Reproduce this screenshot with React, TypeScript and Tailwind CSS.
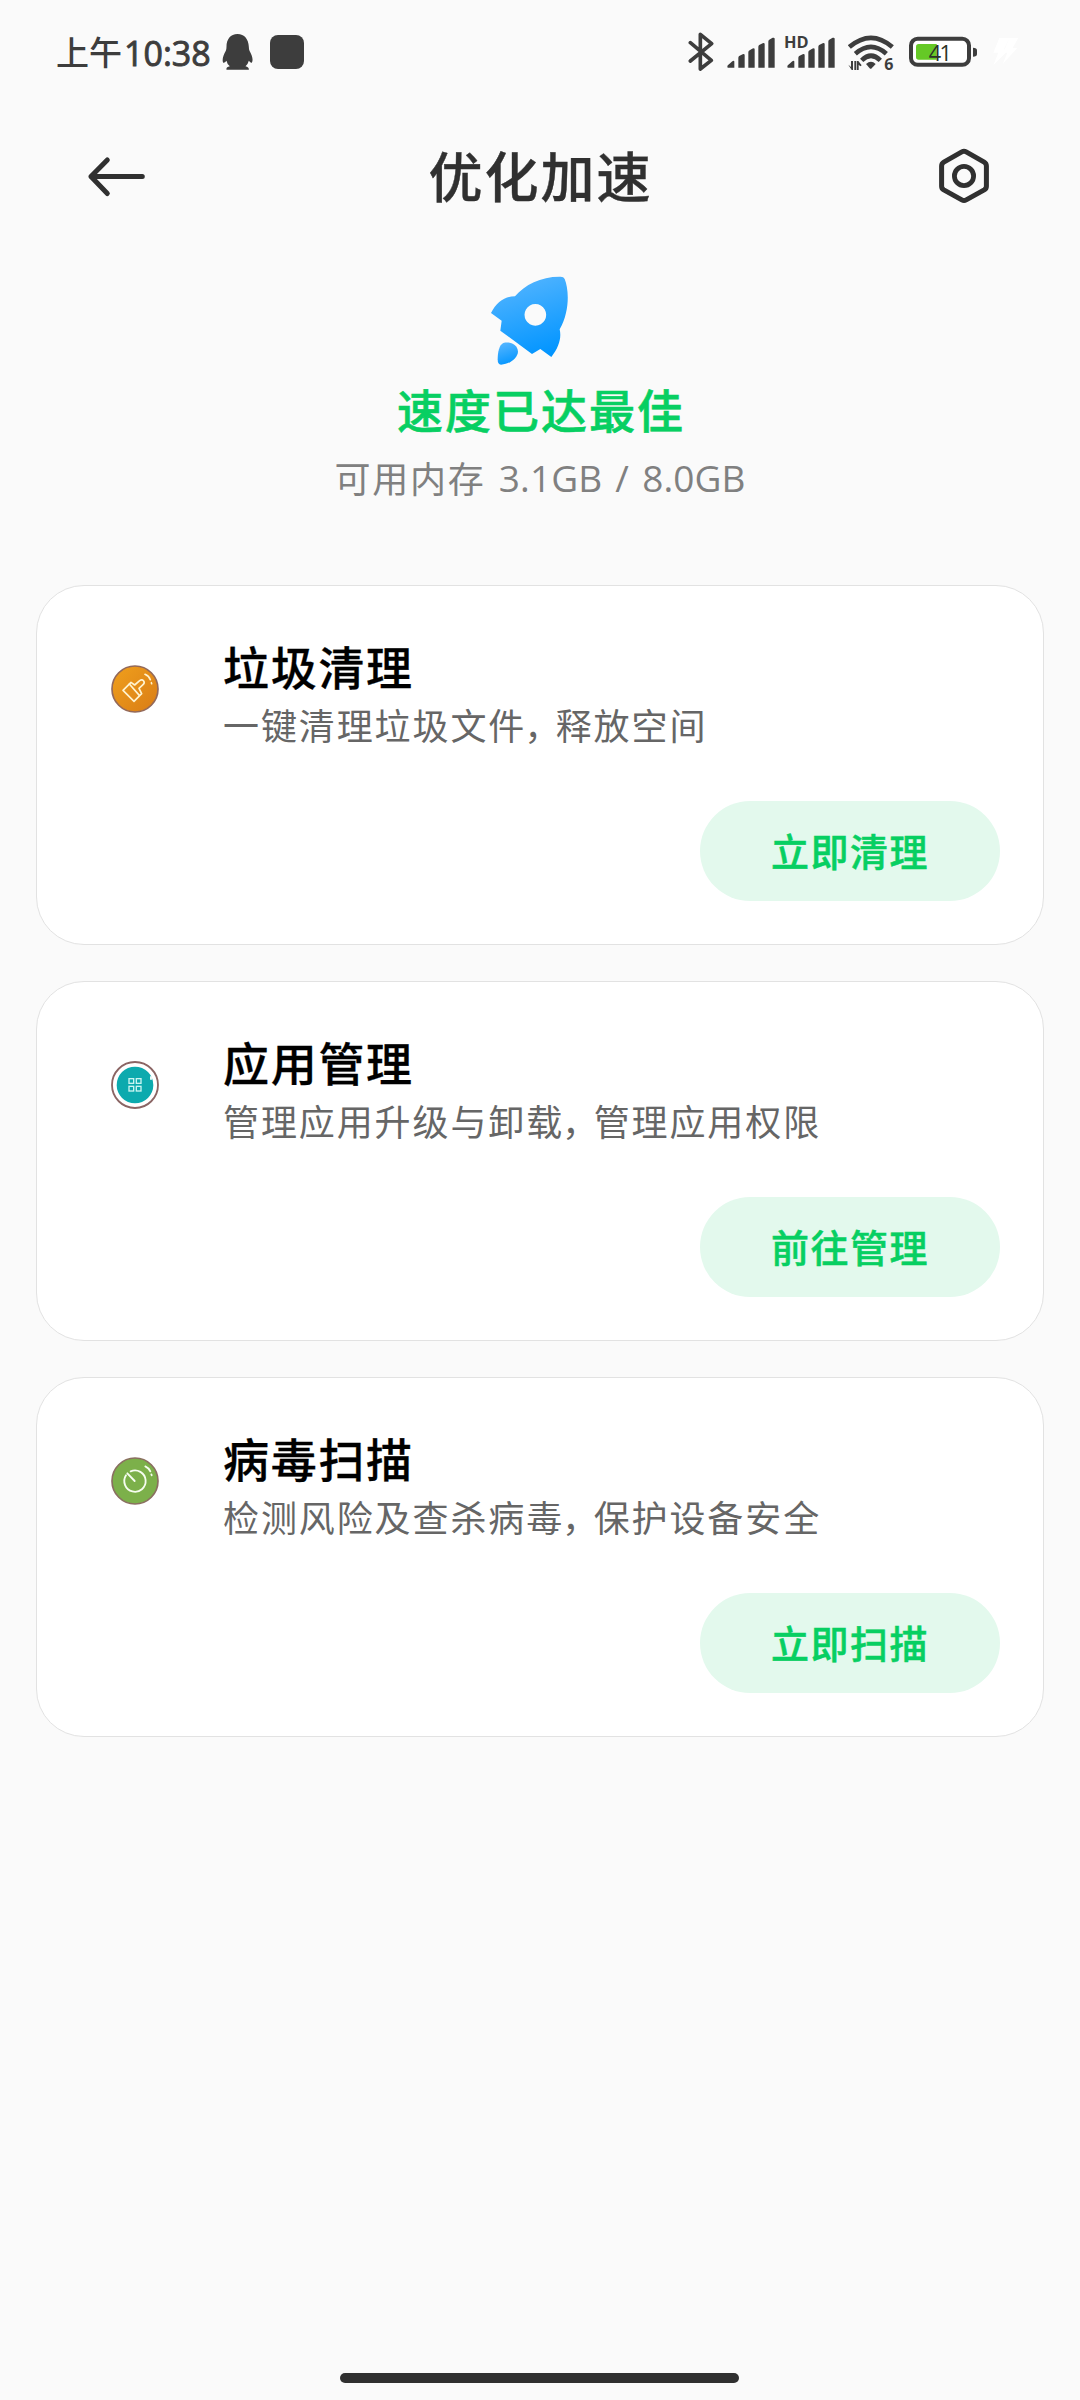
import type { ReactNode } from 'react';

interface Feature {
    title: string;
    desc: [string, string];
    action: string;
    icon: ReactNode;
}

function CleanIcon() {
    return (
        <svg viewBox="63 74 144 144" className="w-12 h-12">
            <defs>
                <linearGradient id="clean" x1="0" y1="0" x2="1" y2="1">
                    <stop offset="0" stopColor="#f0a01c" />
                    <stop offset="1" stopColor="#d97c16" />
                </linearGradient>
            </defs>
            <circle cx="135" cy="146" r="69" fill="url(#clean)" stroke="#93695a" strokeWidth="5" />
            <g fill="none" stroke="#fff3cf" strokeWidth="5" strokeLinejoin="round" strokeLinecap="round">
                <path d="M99 150 L123 126 L134 134 L149 121 Q156 116 161 122 Q165 128 159 133 L147 144 L155 160 L132 183 Z" />
                <path d="M118 131 L148 165" />
                <path d="M165 102 Q177 107 181 118" />
                <path d="M184 127 L185 130" />
            </g>
        </svg>
    );
}

function AppsIcon() {
    return (
        <svg viewBox="63 63 144 144" className="w-12 h-12">
            <circle cx="135" cy="135" r="69" fill="#fff" stroke="#8b6564" strokeWidth="5.5" />
            <circle cx="135" cy="135" r="55" fill="#0caaae" />
            <path d="M180 109 h6 v10 h-6z" fill="#e6f8f7" />
            <g fill="none" stroke="#c9f5f2" strokeWidth="4">
                <rect x="117" y="116" width="14" height="14" />
                <rect x="139" y="116" width="14" height="14" />
                <rect x="117" y="139" width="14" height="14" />
                <rect x="139" y="139" width="14" height="14" />
            </g>
        </svg>
    );
}

function ScanIcon() {
    return (
        <svg viewBox="63 66 144 144" className="w-12 h-12">
            <circle cx="135" cy="138" r="69" fill="#7cb04a" stroke="#8a6f60" strokeWidth="5" />
            <g fill="none" stroke="#f6fdf0" strokeWidth="5.5" strokeLinecap="round">
                <path d="M122 109 A32 32 0 1 1 108 121" />
                <path d="M112 115 L134 138" />
                <path d="M166 94 Q177 99 181 109" />
                <path d="M184 118 L185 121" />
            </g>
        </svg>
    );
}

const features: Feature[] = [
    {
        title: '垃圾清理',
        desc: ['一键清理垃圾文件', '释放空间'],
        action: '立即清理',
        icon: <CleanIcon />,
    },
    {
        title: '应用管理',
        desc: ['管理应用升级与卸载', '管理应用权限'],
        action: '前往管理',
        icon: <AppsIcon />,
    },
    {
        title: '病毒扫描',
        desc: ['检测风险及查杀病毒', '保护设备安全'],
        action: '立即扫描',
        icon: <ScanIcon />,
    },
];

function SignalBars() {
    return (
        <path
            d="M2 90 Q0 90 0 86 Q0 82 5 79 L15 70 Q21 66 21 72 V90Z M33 90 V60 Q33 56 37 54 L46 49 Q52 47 52 52 V90Z M63 90 V43 Q63 39 67 37 L76 32 Q82 30 82 35 V90Z M93 90 V27 Q93 23 97 21 L106 16 Q112 14 112 19 V90Z M123 90 V11 Q123 7 127 5 L136 0 Q142 -2 142 3 V90Z"
            fill="#3d3d3d"
        />
    );
}

function StatusBar() {
    return (
        <div className="flex items-start h-[110px] pt-5 text-[#3d3d3d]">
            <div className="flex w-[166px] pl-[56px] h-[66px] items-center whitespace-nowrap">
                <span className="-mt-[4px] text-[33px] leading-[66px] font-medium">上午</span>
                <span className="ml-[2px] -mt-px text-[34px] leading-[66px] font-['Open_Sans',sans-serif] [-webkit-text-stroke:0.9px]">10:38</span>
            </div>
            <svg viewBox="545 0 92 210" className="ml-[56px] w-[31px] h-[70px]">
                <path
                    d="M591 42 C570 42 558 58 558 80 Q558 87 556 92 C548 106 544 120 548 128 Q552 130 558 122 Q560 133 568 139 Q556 142 558 149 H625 Q626 142 615 139 Q622 133 625 122 Q631 130 634 128 C639 120 635 106 627 92 Q625 87 625 80 C624 58 612 42 591 42Z"
                    fill="#3d3d3d"
                />
            </svg>
            <div className="ml-[17px] mt-[15px] w-[34px] h-[34px] rounded-lg bg-[#3d3d3d]" />

            {/* Right side indicators */}
            <div className="ml-auto mr-[61px] flex">
                <svg viewBox="54 0 78 210" className="w-[26px] h-[70px]">
                    <path d="M61 68 L124 121 L91 147 V43 L125 71 L61 123" fill="none" stroke="#3d3d3d" strokeWidth="11" strokeLinejoin="round" strokeLinecap="round" />
                </svg>
                <svg viewBox="171 0 144 210" className="ml-[13px] w-12 h-[70px]">
                    <g transform="translate(172 53.5)"><SignalBars /></g>
                </svg>
                <svg viewBox="342 0 153 210" className="ml-[9px] w-[51px] h-[70px]">
                    <text x="342" y="85" fontSize="50" fontWeight="700" fontFamily="Open Sans" fill="#3d3d3d" textLength="74" lengthAdjust="spacingAndGlyphs">HD</text>
                    <g transform="translate(352 53.5)"><SignalBars /></g>
                </svg>
                <svg viewBox="534 0 138 210" className="ml-[13px] w-[46px] h-[70px]">
                    <g fill="none" stroke="#3d3d3d" strokeWidth="14">
                        <path d="M538 81 Q603 26 667 81" />
                        <path d="M556 101 Q603 60 649 101" />
                        <path d="M575 121 Q603 94 631 121" />
                    </g>
                    <path d="M588 132 Q603 118 617 132 L605 145 Q602 148 599 145Z" fill="#3d3d3d" />
                    <path d="M535 134 L543 141 V123 H549 V150 H545Z M553 123 H558 V150 H553Z M560 123 H565 L575 136 L571 139 L566 134 V150 H560Z" fill="#3d3d3d" />
                    <text x="643" y="150" fontSize="48" fontWeight="700" fontFamily="Open Sans" fill="#3d3d3d">6</text>
                </svg>
                <svg viewBox="717 0 207 210" className="ml-[15px] w-[69px] h-[70px]">
                    <rect x="723" y="56.5" width="174" height="78" rx="20" fill="#fff" stroke="#3d3d3d" strokeWidth="12" />
                    <path d="M746 72 H800 V119 H746 Q738 119 738 111 V80 Q738 72 746 72Z" fill="#65c926" />
                    <path d="M909 83 Q921 83 921 91 V102 Q921 110 909 110Z" fill="#3d3d3d" />
                    <text x="776" y="122" fontSize="65" fontFamily="Open Sans" fill="#2c3326" textLength="70">41</text>
                </svg>
                <svg viewBox="966 0 81 210" className="ml-[14px] w-[27px] h-[70px]">
                    <path d="M988 54 L970 98 H985 L970 136 L1018 88 H1002 L1018 54Z M1018 54 L1000 98 H1012 L998 132 L1042 84 H1028 L1045 54Z" fill="#fff" />
                </svg>
            </div>
        </div>
    );
}

function Header() {
    return (
        <header className="flex items-center justify-between h-[134px] pl-[85px] pr-[88px]">
            <svg viewBox="85 150 60 54" className="w-[60px] h-[54px]">
                <path d="M107.3 160 L91 176.5 L107.3 193.5 M91 176.5 H142.3" fill="none" stroke="#303030" strokeWidth="5" strokeLinecap="round" strokeLinejoin="round" />
            </svg>
            <h1 className="-mt-[4px] text-[54px] leading-[60px] tracking-[2px] font-medium text-[#303030] [-webkit-text-stroke:0.4px]">优化加速</h1>
            <svg viewBox="936 147 56 60" className="w-14 h-[60px]">
                <path d="M961.8 151.9 L943.8 162.1 Q941.6 163.4 941.6 166 V186.2 Q941.6 188.6 943.8 189.9 L961.8 199.9 Q964 201.1 966.2 199.9 L984.2 189.9 Q986.4 188.6 986.4 186.2 V166 Q986.4 163.4 984.2 162.1 L966.2 151.9 Q964 150.7 961.8 151.9Z" fill="none" stroke="#303030" strokeWidth="5" />
                <circle cx="964" cy="176" r="9.6" fill="none" stroke="#303030" strokeWidth="4.8" />
            </svg>
        </header>
    );
}

function SpeedStatus() {
    return (
        <section className="flex flex-col items-center h-[341px] pt-[30px]">
            <svg viewBox="510 42 240 276" className="-ml-[20px] w-20 h-[92px]">
                <defs>
                    <linearGradient id="rocket" x1="0.3" y1="0" x2="0.6" y2="1">
                        <stop offset="0" stopColor="#54b5ff" />
                        <stop offset="1" stopColor="#0295ff" />
                    </linearGradient>
                </defs>
                <path
                    fillRule="evenodd"
                    d="M585 109 C615 73 664 49 722 50 Q731 50 734 57 C747 88 750 155 719 208 C725 233 717 262 694 291 L661 267 L636 282 L541 212 L545 182 L513 159 C530 126 553 109 585 109Z M646 132 a32.500 32.500 0 1 0 0.100 0Z"
                    fill="url(#rocket)"
                />
                <path d="M550 249 C569 244 592 252 594 275 C593 294 568 313 543 314 Q533 314 533 298 C533 277 538 254 550 249Z" fill="url(#rocket)" />
            </svg>
            <p className="mt-[7px] pl-[2px] text-[46px] leading-[70px] tracking-[2px] font-medium text-[#07cf62] [-webkit-text-stroke:0.6px]">速度已达最佳</p>
            <p className="mt-[3px] flex text-[36px] leading-[62px] tracking-[1.8px] text-[#808080] whitespace-pre">
                <span>可用内存</span>
                <span className="pt-px text-[37px] font-['Open_Sans',sans-serif] tracking-[0.1px] [word-spacing:3.5px]"> 3.1GB / 8.0GB</span>
            </p>
        </section>
    );
}

function FeatureCard({ title, desc, action, icon }: Feature) {
    return (
        <div className="flex flex-col h-[360px] rounded-[48px] border border-[#e2e2e2] bg-white">
            <div className="flex h-[215px]">
                <div className="w-[186px] pl-[74px] pt-[79px]">{icon}</div>
                <div className="pt-[49px]">
                    <h2 className="text-[46px] leading-[60px] tracking-[1.7px] font-medium text-black [-webkit-text-stroke:0.3px]">{title}</h2>
                    <p className="mt-[2px] text-[36px] leading-[54px] tracking-[1.9px] text-[#666]">
                        {desc[0]}
                        <span className="-ml-[2px] tracking-[-4.5px]">{'\uff0c'}</span>
                        {desc[1]}
                    </p>
                </div>
            </div>
            <button className="self-end mr-[43px] pb-[3px] w-[300px] h-[100px] rounded-full bg-[#e3f9ed] text-[38px] tracking-[1.5px] font-medium text-[#07cf62] [-webkit-text-stroke:0.5px]">
                {action}
            </button>
        </div>
    );
}

export default function App() {
    return (
        <div className="flex flex-col w-[1080px] h-[2400px] bg-[#fafafa] font-['Noto_Sans_CJK_SC',sans-serif]">
            <StatusBar />
            <Header />
            <SpeedStatus />
            <main className="flex flex-col gap-9 px-9">
                {features.map((feature) => (
                    <FeatureCard key={feature.title} {...feature} />
                ))}
            </main>

            {/* Gesture bar */}
            <div className="mt-auto mb-[17px] ml-[340px] w-[399px] h-[10px] rounded-full bg-[#303030]" />
        </div>
    );
}
